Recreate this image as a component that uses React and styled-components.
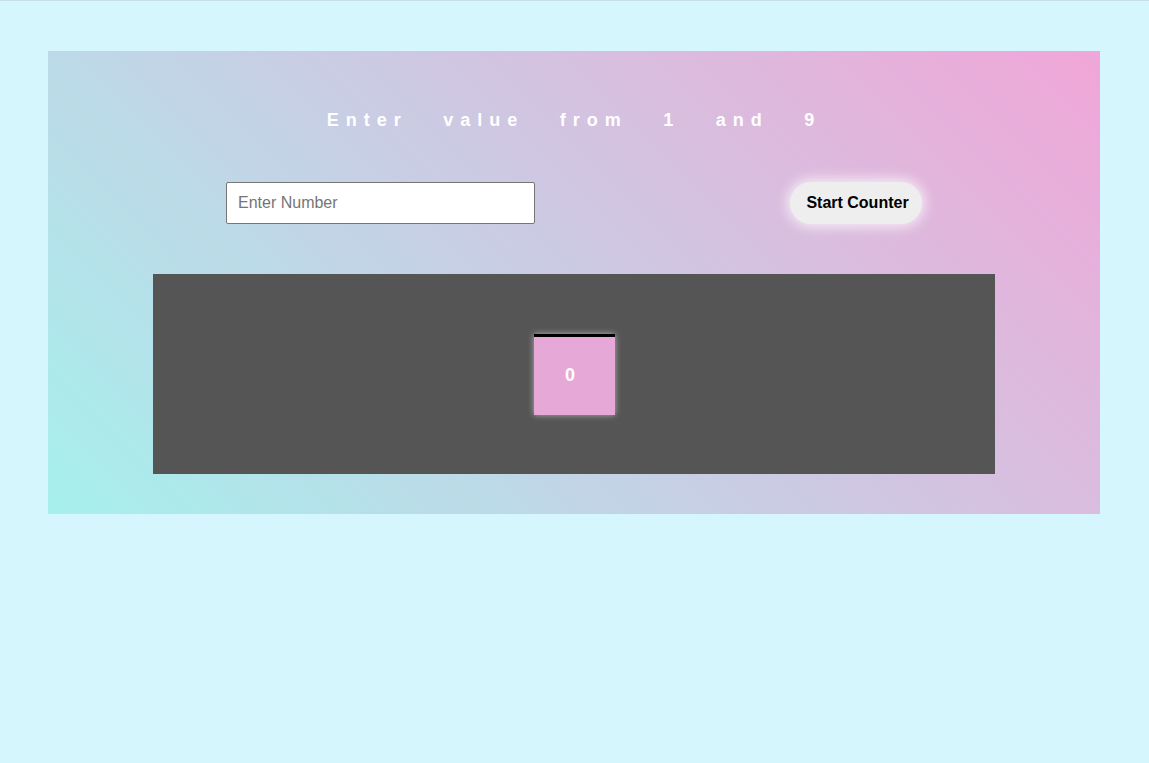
import React, { useState } from 'react'
import styled, { createGlobalStyle } from 'styled-components'

const GlobalStyle = createGlobalStyle`
  html, body {
    margin: 0;
    padding: 0;
  }
  body {
    background-color: #d5f6fd;
    border-top: 1px solid #c6dfe8;
    min-height: 762px;
    font-family: 'Liberation Sans', Arial, sans-serif;
  }
`

function App() {
  const [value, setValue] = useState('')
  const [count] = useState(0)

  return (
    <>
      <GlobalStyle />
      <Card>
        <Title>Enter value from 1 and 9</Title>
        <Controls>
          <NumberInput
            type='text'
            placeholder='Enter Number'
            value={value}
            onChange={(e) => setValue(e.target.value)}
          />
          <StartBtn type='button'>Start Counter</StartBtn>
        </Controls>
        <Stage>
          <Tile>{count}</Tile>
        </Stage>
      </Card>
    </>
  )
}

export default App

const Card = styled.main`
  width: 1052px;
  margin: 50px 0 0 48px;
  padding: 59px 0 40px;
  box-sizing: border-box;
  display: flex;
  flex-direction: column;
  align-items: center;
  background: linear-gradient(45deg, #a6f0ee 0%, #f0a6d8 100%);
`
const Title = styled.h1`
  margin: 0;
  font-size: 18px;
  line-height: 20px;
  font-weight: 700;
  color: #ffffff;
  letter-spacing: 7px;
  word-spacing: 23.5px;
  text-align: center;
`
const Controls = styled.div`
  width: 100%;
  box-sizing: border-box;
  margin-top: 52px;
  padding: 0 178px;
  display: flex;
  justify-content: space-between;
  align-items: center;
`
const NumberInput = styled.input`
  width: 309px;
  height: 42px;
  box-sizing: border-box;
  padding: 0 11px;
  border: 1px solid #767676;
  border-radius: 2px;
  background: #ffffff;
  font-family: 'Liberation Sans', Arial, sans-serif;
  font-size: 16px;
  color: #222;
  outline: none;
  &::placeholder {
    color: #757575;
  }
`
const StartBtn = styled.button`
  width: 132px;
  height: 42px;
  padding: 0 0 0 3px;
  border: none;
  border-radius: 21px;
  background-color: #eeeeee;
  color: #000;
  font-family: 'Liberation Sans', Arial, sans-serif;
  font-size: 16px;
  font-weight: 700;
  box-shadow: 0 0 14px 2px rgba(255, 255, 255, 0.85);
  cursor: pointer;
`
const Stage = styled.section`
  width: 842px;
  height: 200px;
  margin-top: 50px;
  background-color: #555555;
  display: flex;
  justify-content: center;
  align-items: center;
`
const Tile = styled.div`
  width: 81px;
  height: 78px;
  box-sizing: content-box;
  border-top: 3px solid #000;
  background-color: #e6a8d7;
  box-shadow: 0 0 6px rgba(255, 255, 255, 0.55);
  display: flex;
  justify-content: center;
  align-items: center;
  color: #ffffff;
  font-size: 18px;
  font-weight: 700;
  text-indent: -8px;
`
